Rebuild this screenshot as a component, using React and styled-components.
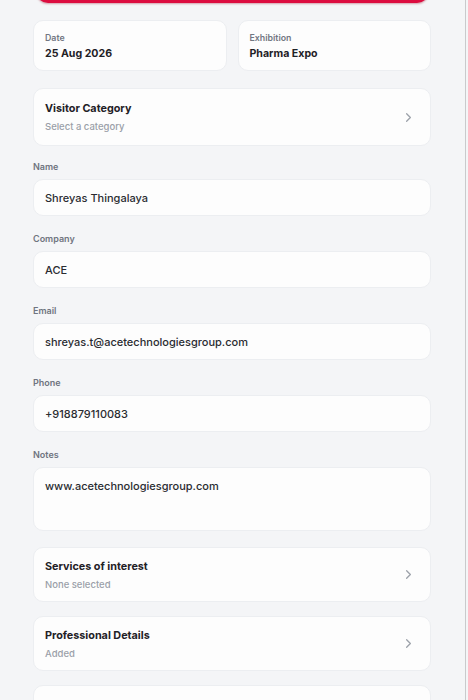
import React from "react";
import styled, { createGlobalStyle } from "styled-components";
import { ChevronRight } from "lucide-react";

const GlobalStyle = createGlobalStyle`
  html, body {
    margin: 0;
    padding: 0;
    background: #f4f5f7;
    font-family: Inter, "Noto Sans", "Liberation Sans", sans-serif;
    overflow: hidden;
  }
`;

const Page = styled.div`
  width: 466px;
  height: 700px;
  border-right: 1px solid #c9cacc;
  box-sizing: border-box;
  overflow: hidden;
`;

const Content = styled.div`
  width: 398px;
  margin-left: 33px;
  margin-top: -41px;
  display: flex;
  flex-direction: column;
`;

const SubmitButton = styled.button`
  height: 44px;
  margin: 0 2px 17px 3px;
  border: none;
  border-radius: 12px;
  background: #dc0c3f;
  box-shadow: 0 1px 2px rgba(150, 0, 30, 0.35);
`;

const InfoRow = styled.div`
  display: grid;
  grid-template-columns: 1fr 1fr;
  gap: 11px;
  margin-bottom: 17px;
`;

const Card = styled.div`
  background: #fdfdfd;
  border: 1px solid #eceef1;
  border-radius: 10px;
  box-sizing: border-box;
`;

const InfoCard = styled(Card)`
  height: 51px;
  padding: 10px 11px;
`;

const InfoLabel = styled.div`
  font-size: 8.8px;
  font-weight: 600;
  color: #727782;
  line-height: 13px;
`;

const InfoValue = styled.div`
  font-size: 10.6px;
  font-weight: 700;
  color: #1f2126;
  line-height: 16px;
  margin-top: 2px;
`;

const NavCard = styled(Card)`
  height: ${(p) => p.$h}px;
  margin-bottom: ${(p) => p.$mb}px;
  padding: 0 14px 0 11px;
  display: flex;
  align-items: center;
  justify-content: space-between;
`;

const NavTitle = styled.div`
  font-size: 10.8px;
  font-weight: 700;
  color: #1f2126;
  line-height: 16px;
`;

const NavSub = styled.div`
  font-size: 9.5px;
  font-weight: 500;
  color: #9a9fa8;
  line-height: 13px;
  margin-top: 3px;
`;

const Field = styled.div`
  display: flex;
  flex-direction: column;
  margin-bottom: 16px;
`;

const FieldLabel = styled.div`
  font-size: 9px;
  font-weight: 600;
  color: #6f7480;
  line-height: 13px;
  margin-bottom: 6px;
`;

const InputBox = styled(Card)`
  height: ${(p) => p.$h || 37}px;
  padding: 0 11px;
  display: flex;
  align-items: ${(p) => (p.$multi ? "flex-start" : "center")};
  padding-top: ${(p) => (p.$multi ? "11px" : "0")};
  font-size: 11px;
  font-weight: 500;
  color: #2a2c31;
`;

const Arrow = styled(ChevronRight)`
  color: #9ca1a9;
  flex-shrink: 0;
`;

function Nav({ title, sub, h, mb }) {
  return (
    <NavCard $h={h} $mb={mb}>
      <div>
        <NavTitle>{title}</NavTitle>
        <NavSub>{sub}</NavSub>
      </div>
      <Arrow size={15} strokeWidth={2} />
    </NavCard>
  );
}

const fields = [
  { label: "Name", value: "Shreyas Thingalaya" },
  { label: "Company", value: "ACE" },
  { label: "Email", value: "shreyas.t@acetechnologiesgroup.com" },
  { label: "Phone", value: "+918879110083" },
];

export default function App() {
  return (
    <Page>
      <GlobalStyle />
      <Content>
        <SubmitButton type="button" aria-label="Submit" />
        <InfoRow>
          <InfoCard>
            <InfoLabel>Date</InfoLabel>
            <InfoValue>25 Aug 2026</InfoValue>
          </InfoCard>
          <InfoCard>
            <InfoLabel>Exhibition</InfoLabel>
            <InfoValue>Pharma Expo</InfoValue>
          </InfoCard>
        </InfoRow>
        <Nav title="Visitor Category" sub="Select a category" h={58} mb={14} />
        {fields.map((f) => (
          <Field key={f.label}>
            <FieldLabel>{f.label}</FieldLabel>
            <InputBox>{f.value}</InputBox>
          </Field>
        ))}
        <Field>
          <FieldLabel>Notes</FieldLabel>
          <InputBox $h={64} $multi>www.acetechnologiesgroup.com</InputBox>
        </Field>
        <Nav title="Services of interest" sub="None selected" h={55} mb={14} />
        <Nav title="Professional Details" sub="Added" h={55} mb={14} />
        <Nav title="" sub="" h={55} mb={14} />
      </Content>
    </Page>
  );
}
